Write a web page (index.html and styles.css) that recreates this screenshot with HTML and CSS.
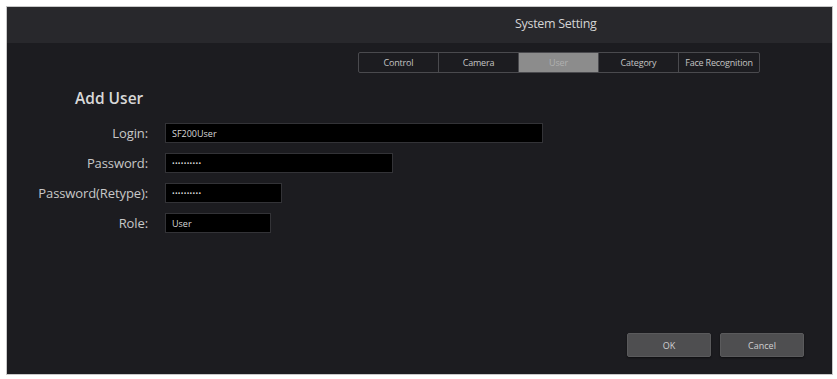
FILE: index.html
```html
<!DOCTYPE html>
<html lang="en">
  <head>
    <meta charset="UTF-8" />
    <meta name="viewport" content="width=device-width, initial-scale=1.0" />
    <title>System Setting</title>
    <link rel="stylesheet" href="styles.css">
  </head>
  <body>
    <div class="window">
      <div class="titlebar">System Setting</div>

      <div class="content">
        <div class="tabs">
          <div class="tab">Control</div>
          <div class="tab">Camera</div>
          <div class="tab active">User</div>
          <div class="tab">Category</div>
          <div class="tab">Face Recognition</div>
        </div>

        <h2>Add User</h2>

        <div class="form">
          <label for="login">Login:</label>
          <input type="text" id="login" class="w-login" value="SF200User" />

          <label for="password">Password:</label>
          <input type="text" id="password" class="w-pass dots" value="••••••••••" />

          <label for="password2">Password(Retype):</label>
          <input type="text" id="password2" class="w-retype dots" value="••••••••••" />

          <label for="role">Role:</label>
          <input type="text" id="role" class="w-role" value="User" />
        </div>
      </div>

      <div class="buttons">
        <button id="ok">OK</button>
        <button id="cancel">Cancel</button>
      </div>
    </div>
  </body>
</html>
```

FILE: styles.css
```css
* {
  margin: 0;
  padding: 0;
  box-sizing: border-box;
  font-family: "Open Sans", "Liberation Sans", sans-serif;
}

body {
  background-color: #ffffff;
  padding: 6px;
}

.window {
  width: 827px;
  height: 369px;
  display: flex;
  flex-direction: column;
  background-color: #1c1c20;
  border: 1px solid #c8c8c8;
}

.titlebar {
  height: 36px;
  line-height: 34px;
  padding-left: 508px;
  background-color: #28282c;
  color: #d4d4d4;
  font-size: 12.5px;
  letter-spacing: -0.3px;
}

.content {
  flex-grow: 1;
  padding-top: 9px;
}

.tabs {
  display: flex;
  width: 402px;
  height: 21px;
  margin-left: 351px;
  border: 1px solid #4a4a4e;
  border-radius: 2px;
}

.tab {
  width: 80px;
  line-height: 19px;
  text-align: center;
  font-size: 9px;
  color: #c4c4c4;
  border-right: 1px solid #4a4a4e;
  letter-spacing: -0.2px;
}

.tab:last-child {
  border-right: none;
  flex-grow: 1;
}

.tab.active {
  background-color: #8c8c8c;
  color: #b0b0b0;
}

h2 {
  margin: 15px 0 0 68px;
  font-size: 15.5px;
  font-weight: 600;
  line-height: 20px;
  color: #d8d8d8;
}

.form {
  display: grid;
  grid-template-columns: 141px auto;
  column-gap: 17px;
  row-gap: 10px;
  margin-top: 15px;
  justify-items: start;
  align-items: center;
}

.form label {
  justify-self: end;
  font-size: 13px;
  color: #c8c8c8;
  letter-spacing: -0.1px;
  white-space: nowrap;
}

.form input {
  height: 20px;
  padding: 0 6px;
  background-color: #000000;
  border: 1px solid #333337;
  color: #d8d8d8;
  font-size: 9px;
  outline: none;
}

.form input.dots {
  font-size: 7px;
  letter-spacing: 0.3px;
}

.w-login {
  width: 378px;
}

.w-pass {
  width: 228px;
}

.w-retype {
  width: 117px;
}

.w-role {
  width: 106px;
}

.buttons {
  display: flex;
  justify-content: flex-end;
  gap: 9px;
  padding: 0 28px 17px 0;
}

.buttons button {
  width: 84px;
  height: 24px;
  background-color: #4e4e50;
  color: #d0d0d0;
  border: 1px solid #5a5a5c;
  border-radius: 2px;
  font-size: 9px;
  box-shadow: rgba(0, 0, 0, 0.5) 0px 1px 2px;
}
```
